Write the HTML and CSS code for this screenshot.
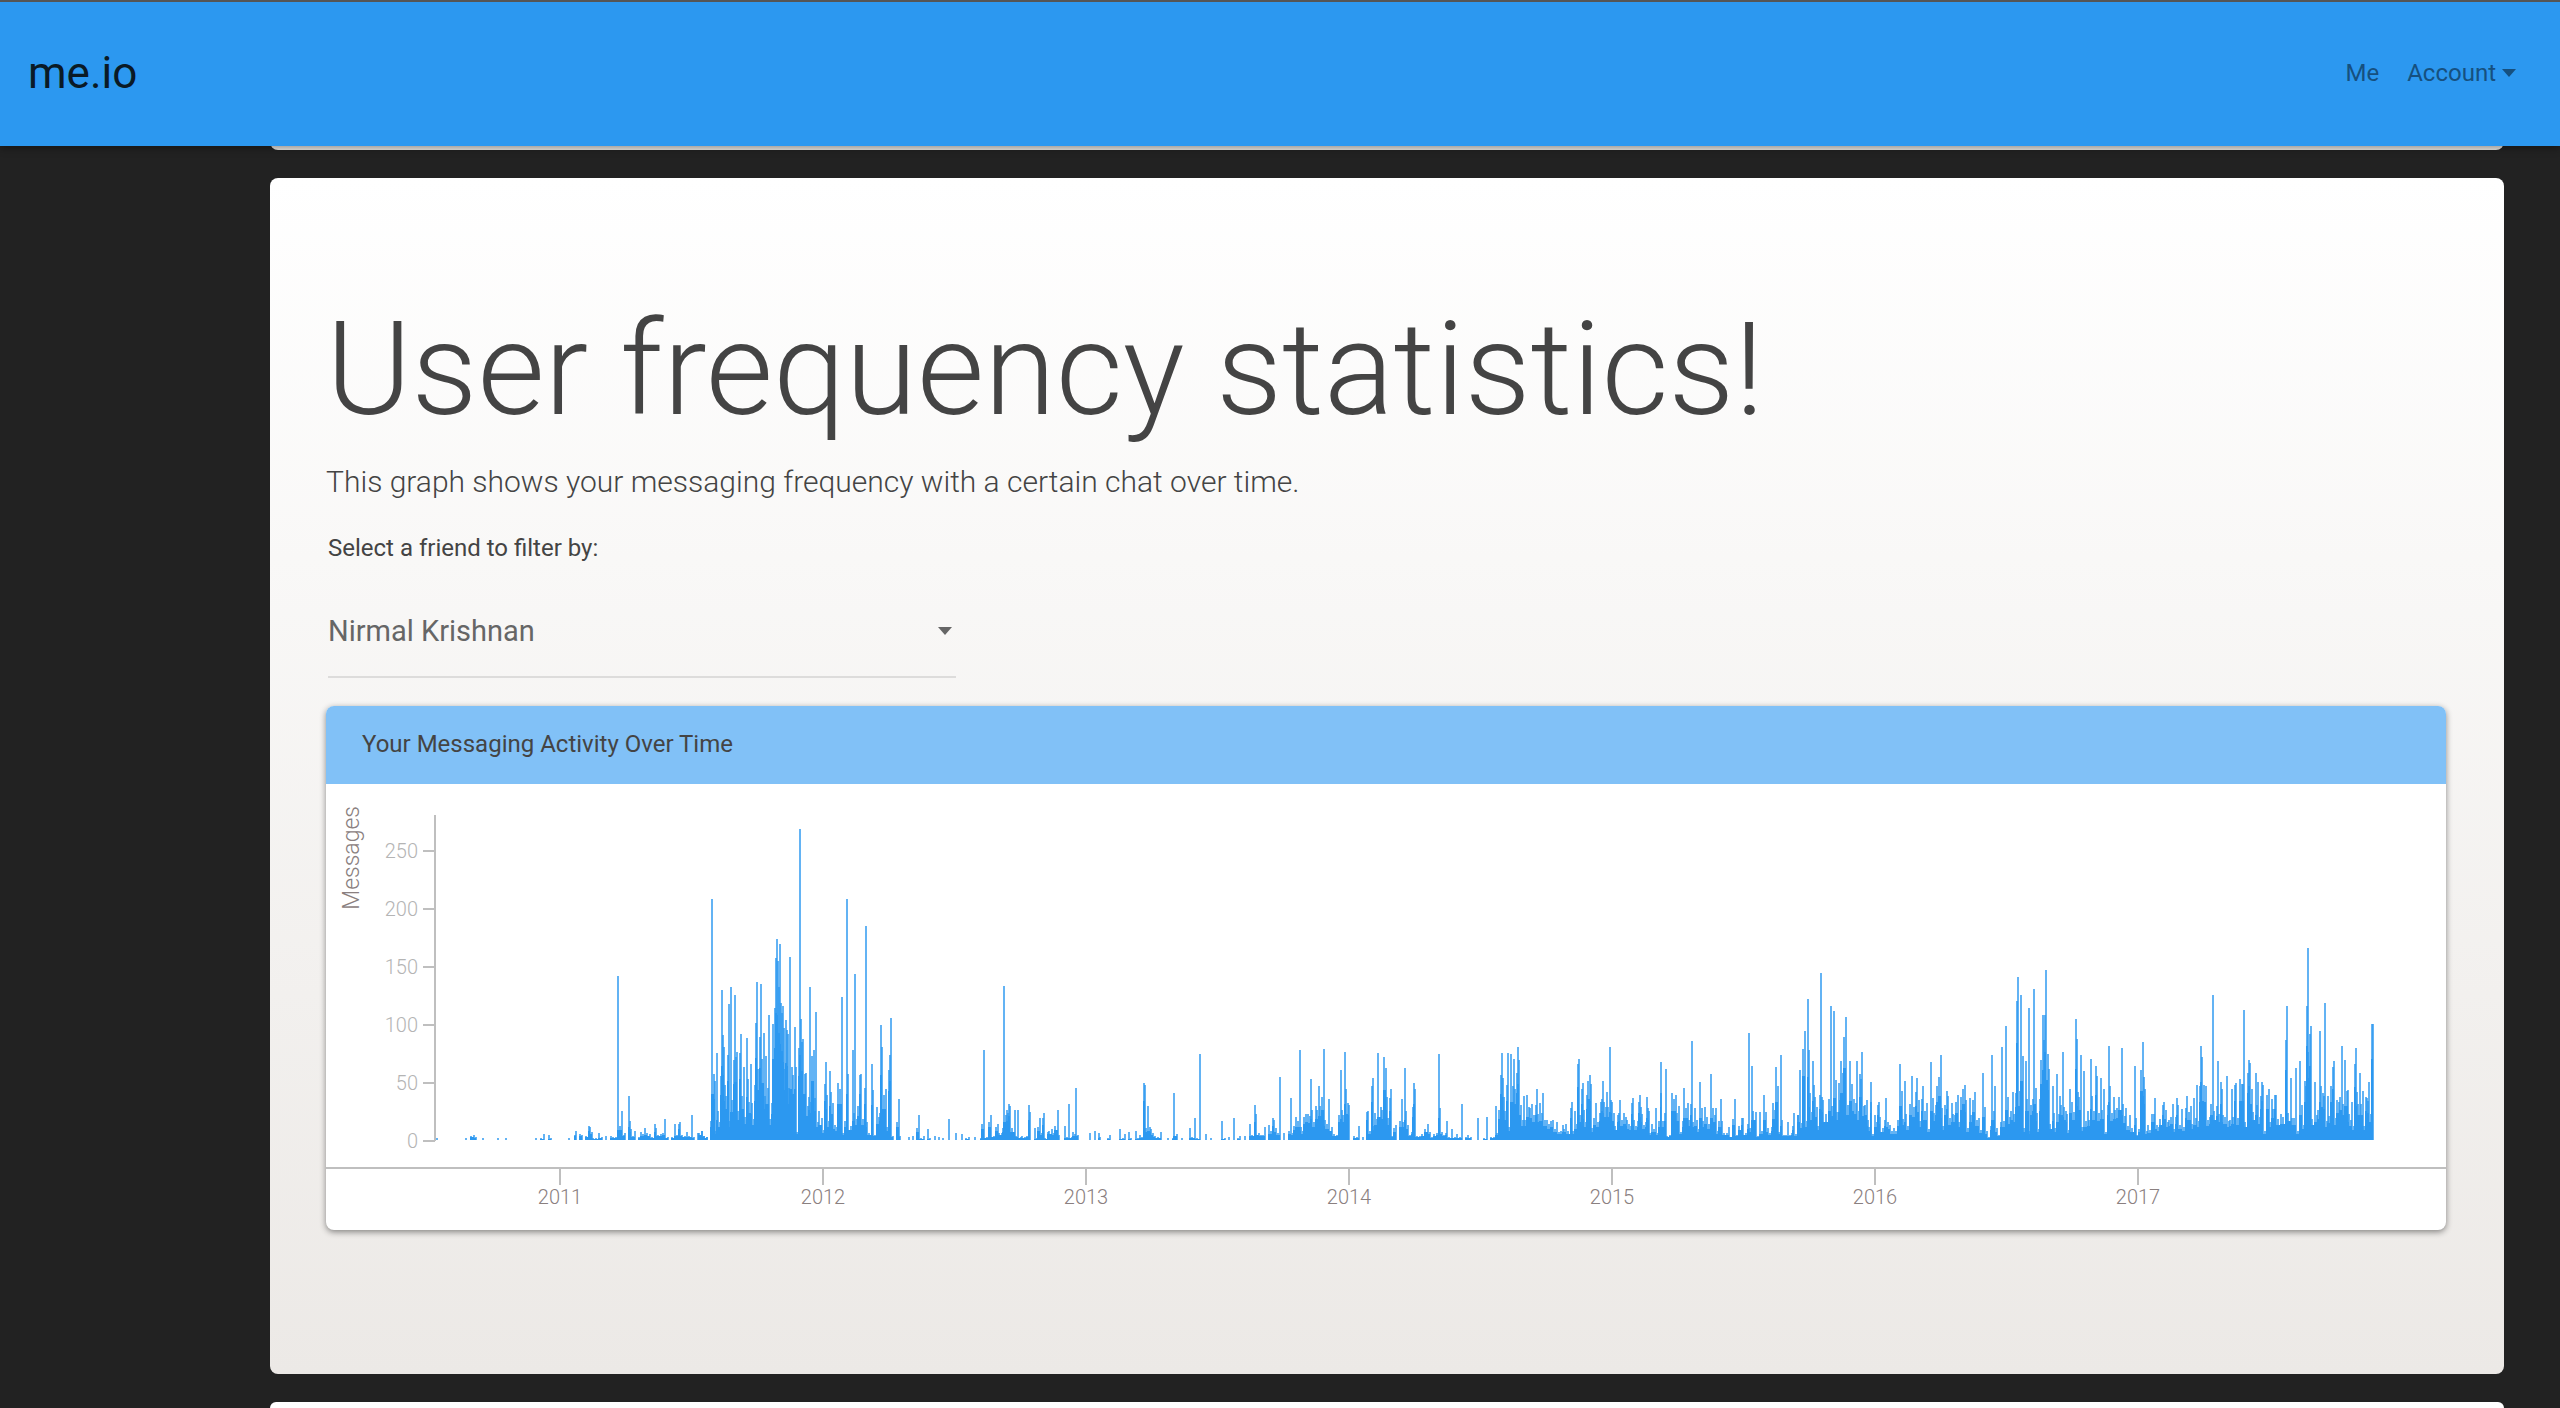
FILE: index.html
```html
<!DOCTYPE html>
<html lang="en">
<head>
<meta charset="utf-8">
<title>me.io</title>
<meta name="viewport" content="width=device-width, initial-scale=1">
<link rel="stylesheet" href="styles.css">
</head>
<body>
<header class="navbar">
  <a class="brand" href="#">me.io</a>
  <nav class="links">
    <a class="link" href="#">Me</a>
    <button class="link" type="button">Account
      <svg class="caret" viewBox="0 0 14 8" aria-hidden="true"><path d="M0 0h14L7 8z"/></svg>
    </button>
  </nav>
</header>
<main class="cards">
  <section class="card card-previous"></section>
  <section class="card card-main">
    <h1 class="title">User frequency statistics!</h1>
    <p class="lead">This graph shows your messaging frequency with a certain chat over time.</p>
    <label class="label" for="friend">Select a friend to filter by:</label>
    <div class="select-box">
      <select class="select" id="friend"><option>Nirmal Krishnan</option></select>
      <svg class="select-caret" viewBox="0 0 14 8" aria-hidden="true"><path d="M0 0h14L7 8z"/></svg>
    </div>
    <article class="panel">
      <h2 class="panel-title">Your Messaging Activity Over Time</h2>
      <svg class="chart" id="chart" viewBox="0 0 2120 446" role="img" aria-label="Messages over time"></svg>
    </article>
  </section>
  <section class="card card-next"></section>
</main>
<script src="chart.js"></script>
</body>
</html>
```
FILE: styles.css
```css
* {
  box-sizing: border-box;
}

body {
  display: flex;
  flex-direction: column;
  margin: 0;
  min-height: 100vh;
  background: #222;
  border-top: 2px solid #555;
  font-family: Roboto, "Liberation Sans", sans-serif;
  color: #444;
}

.navbar {
  position: relative;
  z-index: 1;
  display: flex;
  align-items: center;
  justify-content: space-between;
  height: 144px;
  padding: 0 44px 2px 28px;
  background: #2c98f0;
  box-shadow: 0 2px 8px rgba(0, 0, 0, .4);
}

.brand {
  font-size: 44px;
  line-height: 48px;
  color: #0a1a26;
  text-decoration: none;
}

.links {
  display: flex;
  align-items: center;
  gap: 28px;
}

.link {
  display: flex;
  align-items: center;
  gap: 6px;
  padding: 0;
  border: 0;
  background: none;
  font: 400 24px/32px Roboto, "Liberation Sans", sans-serif;
  color: #16507f;
  text-decoration: none;
}

.caret,
.select-caret {
  width: 14px;
  height: 8px;
  fill: currentColor;
}

.cards {
  display: flex;
  flex: 1;
  flex-direction: column;
  gap: 28px;
  margin: -16px 56px 0 270px;
}

.card {
  flex: none;
  border-radius: 8px;
  background: linear-gradient(#fff, #ece9e6);
}

.card-previous {
  height: 20px;
  background: #ece9e6;
}

.card-main {
  padding: 124px 58px 144px 56px;
}

.card-next {
  flex: 1;
  border-radius: 8px 8px 0 0;
  background: #fff;
}

.title {
  margin: 0 0 24px;
  font-size: 130px;
  line-height: 136px;
  font-weight: 300;
}

.lead {
  margin: 0 0 30px;
  font-size: 30px;
  line-height: 40px;
  font-weight: 300;
}

.label {
  display: block;
  margin: 0 0 22px 2px;
  font-size: 24px;
  line-height: 32px;
}

.select-box {
  position: relative;
  width: 628px;
  margin: 0 0 28px 2px;
  color: #666;
}

.select {
  display: block;
  width: 100%;
  height: 92px;
  padding: 0;
  border: 0;
  border-bottom: 2px solid #dddcdb;
  appearance: none;
  background: none;
  font: 400 29px/40px Roboto, "Liberation Sans", sans-serif;
  color: inherit;
}

.select-caret {
  position: absolute;
  top: 41px;
  right: 4px;
  pointer-events: none;
}

.panel {
  overflow: hidden;
  border-radius: 8px;
  background: #fff;
  box-shadow: 0 2px 6px rgba(0, 0, 0, .45);
}

.panel-title {
  margin: 0;
  padding: 0 36px 2px;
  background: #81c1f7;
  font-size: 24px;
  line-height: 76px;
  font-weight: 400;
}

.chart {
  display: block;
  width: 100%;
  font-family: Roboto, "Liberation Sans", sans-serif;
  font-weight: 300;
  font-size: 20px;
}

.axis {
  fill: none;
  stroke: #bfbfbf;
  stroke-width: 2;
}

.tick-y {
  fill: #b4b4b4;
  text-anchor: end;
}

.tick-x {
  fill: #8a8080;
  text-anchor: middle;
}

.axis-name {
  font-size: 23px;
  fill: #8a8080;
  text-anchor: end;
}

.bars {
  fill: #2c98f0;
  shape-rendering: crispEdges;
}

.bars-soft {
  fill-opacity: .74;
}
```
FILE: chart.js
```js
// Each run holds the chart x of its start, its floor, and pairs of
// (offset, top). Offsets and tops are in thirds of a chart unit.
const runs = [
  [-6, 1080, "351 1074,438 1074,453 1068,463 1066,469 1070,489 1074,534 1074,557 1074,648 1074,663 1074,671 1062,686 1066,692 1074,748 1074,766 1065,769 1053,781 1062,785 1064,797 1069,807 1038,811 1042,815 1057,820 1074,828 1074,837 1059,846 1070,857 1068,872 1068,880 1071,888 1071,894 588,900 1038,906 993,912 1065,916 1059,927 948,931 1023,934 1046,940 1068,946 1053,956 1072,964 1056,970 1062,975 1045,982 1059,990 1062,996 1072,1005 1032,1009 1045,1015 1065,1022 1062,1029 1059,1035 1017,1045 1070,1056 1072,1065 1032,1070 1065,1078 1032,1081 1027,1086 1066,1094 1069,1101 1056,1107 1068,1116 1005,1121 1072,1135 1060,1146 1053,1152 1068,1160 1072"],
  [364, 1020, "26 999,36 993,42 1007,50 1011,63 963,66 297,72 822,76 843,79 993,82 759,85 934,90 966,93 828,96 570,99 705,102 741,106 855,109 888,114 765,118 612,121 963,124 561,127 900,132 780,135 585,138 770,141 756,145 933,150 759,153 702,156 888,162 801,165 950,171 714,174 837,178 906,183 792,187 909,192 957,195 855,198 669,202 546,205 808,210 711,213 552,216 777,222 699,225 889,228 768,234 865,237 645,241 957,246 910,249 672,255 624,258 474,261 417,264 483,267 560,270 432,273 609,276 640,279 618,282 684,285 807,288 660,291 690,294 702,297 865,300 471,306 801,309 825,315 681,318 801,322 995,327 744,330 87,333 657,336 727,339 717,345 822,349 820,353 918,357 890,360 561,363 905,366 768,372 750,375 895,379 636,383 965,388 933,396 954,402 989,405 852,408 786,412 885,416 963,420 813,423 876,429 909,435 975,440 981,444 849,450 867,456 591,460 1000,466 962,471 297,475 822,484 978,488 750,491 939,496 522,500 957,504 918,510 825,513 822,519 957,524 864,527 378,531 966,536 1000,546 792,550 870,555 1005,561 921,566 951,570 939,573 675,577 741,582 885,588 867,592 981,597 810,600 765,603 654,609 1008,621 966,627 897,631 1008,657 1011,669 1008,681 984,687 945"],
  [594, 720, "3 714,12 708,24 687,30 714,44 708,57 711,68 714,87 657,108 699,126 702,138 714,148 711,165 711,183 714,186 672,192 450,201 711,207 666,213 645,222 708,228 681,234 672,238 699,246 699,249 684,253 258,257 645,261 630,264 640,267 612,270 618,276 684,285 630,289 708,294 630,303 711,307 708,315 710,321 708,327 615,331 636,345 684,350 714,354 681,360 654,365 700,369 654,372 639,376 714,384 696,388 693,396 687,402 699,405 678,414 630,418 705,435 678,441 711,447 612,455 711,459 696,464 702,469 564,474 705,510 699,525 693,537 699,541 711,565 714,570 705,600 687,610 714,615 702,627 696,632 714,649 693,654 714,661 705,666 711,672 549,675 555,679 684,685 618,689 681,693 687,699 699,704 709,714 711,723 696,744 714,759 714,763 579,771 702,786 714,810 684,816 711,825 654,832 714,841 462,858 702,873 714,906 663,915 714,926 711,942 654,955 714"],
  [914, 360, "0 348,15 348,29 312,36 345,44 255,48 282,56 339,62 345,70 345,75 321,86 315,92 333,99 294,103 300,108 324,115 339,120 171,132 339,147 333,153 234,158 339,162 318,168 291,174 303,180 90,184 321,188 333,192 291,198 282,204 282,209 288,213 177,216 270,222 306,228 258,232 270,237 198,241 258,246 231,252 87,256 300,261 312,267 237,276 321,282 342,290 345,297 285,303 150,306 270,310 285,314 96,317 207,323 249,327 255,342 348,352 351,357 318,368 351,381 276,385 273,390 333,396 198,399 174,402 318,406 279,410 297,415 99,423 261,427 270,432 111,438 144,441 231,445 294,450 234,453 207,457 348,463 324,468 315,480 303,485 237,489 305,495 144,499 273,505 315,510 346,515 336,519 261,522 189,526 207,530 348,540 348,547 342,555 327,564 312,569 336,575 350,583 342,590 340,598 102,601 264,606 336,612 345,618 339,621 303,627 351,636 327,645 351,651 342,660 350,666 252,677 350,684 345,692 351,714 294,731 354,741 291,753 351,762 351,768 258,772 339,777 270,782 165,786 99,789 175,792 231,796 273,801 195,805 99,808 320,813 102,818 198,822 117,826 207,830 160,834 81,837 120"],
  [1154, 420, "123 315,129 360,132 288,136 360,142 285,147 321,151 324,157 312,162 345,168 315,171 267,175 342,180 309,185 340,189 279,195 360,201 360,207 372,213 363,219 360,225 387,231 366,237 396,243 392,249 375,252 387,258 372,264 393,273 324,276 306,280 392,285 333,290 372,294 192,297 177,301 345,306 267,309 249,313 330,317 366,321 285,324 243,330 225,333 252,337 384,342 354,349 309,354 366,361 339,363 306,366 297,369 243,373 306,377 321,381 276,385 320,390 141,394 300,397 306,402 339,406 378,413 345,417 339,420 300,426 360,433 339,437 351,441 360,447 372,452 378,456 309,459 294,462 360,468 378,474 363,477 306,480 285,483 321,487 342,491 374,498 366,501 291,505 324,508 333,511 400,517 372,521 387,527 324,533 399,537 363,542 279,544 186,550 363,555 339,558 207,562 408,570 405,575 279,582 297,588 285,592 339,597 318,603 396,609 363,612 264,618 324,624 309,628 360,633 312,637 123,640 366,645 324,651 360,656 387,661 246,666 324,670 362,675 321,681 351,687 372,693 222,699 324,704 345,708 324,713 393,717 363,723 297,727 363,732 399,740 399,748 381,759 357,765 297,772 405,776 378,785 354,789 354,798 400,804 372,807 99,811 384,816 198,820 333,829 336,835 408,840 336,846 393,852 285,858 336,865 384,870 399,876 381,879 309,885 330,888 201,894 258,898 396,903 165,907 360,912 405,918 405,924 366,930 405,936 399,940 378,943 339,948 402,954 345"],
  [1434, 570, "115 495,120 360,125 520,129 297,135 243,140 513,145 147,148 300,151 430,155 486,159 333,162 405,166 441,170 471,175 528,180 435,183 69,186 441,190 450,198 492,207 447,213 168,216 468,222 183,228 390,231 485,236 399,239 450,243 333,248 369,252 261,258 201,264 465,270 333,276 402,282 447,287 460,291 333,296 483,300 372,303 387,306 306,311 468,316 465,320 450,324 510,328 530,332 396,334 456,338 552,345 495,350 516,353 465,357 456,361 501,368 534,375 510,378 444,384 516,390 525,395 543,401 534,408 543,415 510,420 342,426 423,430 507,435 393,438 492,444 528,450 462,456 378,462 471,467 426,471 384,477 450,480 513,486 447,489 408,495 483,501 459,506 537,513 336,519 444,523 489,527 465,531 408,537 381,543 315,546 474,549 528,555 465,561 423,565 438,570 504,575 459,580 492,585 495,589 456,594 435,598 516,602 441,609 417,614 405,618 450,624 534,629 444,634 494,639 450,646 426,652 510,657 504,664 540,669 369,675 471,681 543,688 561,692 528,696 315,702 483,705 408,711 534,718 555,723 516,726 291,732 513,738 228,744 441,749 501,754 483,759 426,763 492,769 429,771 153,774 81,780 423,783 135,789 318,793 534,799 333,802 447,806 174,809 543,813 465,819 447,822 117,828 414,831 489,836 537,840 447,844 330,848 195,851 270,856 195,859 60,864 312,867 357,871 522,879 408,883 489,886 534,891 372,896 492,901 438,903 465,909 306,912 471,918 483,922 492,926 540,931 417,936 456,942 486"],
  [1734, 660, "48 297,51 357,55 516,58 530,63 405,67 620,72 453,78 603,83 573,88 600,93 417,96 528,101 573,108 438,111 468,116 579,123 474,126 570,132 507,138 636,144 555,147 378,150 498,155 579,162 531,166 570,171 564,178 531,186 384,190 552,194 588,198 564,204 618,210 585,216 624,224 438,227 594,232 645,238 628,243 450,248 366,252 471,256 507,260 633,265 615,271 630,276 582,281 582,286 534,291 615,296 620,301 597,308 555,312 546,318 570,324 606,328 600,332 591,339 552,343 627,347 590,351 534,354 555,360 615,366 567,373 621,378 564,381 528,387 576,393 558,397 612,403 534,408 594,412 495,417 603,420 498,423 378,426 411,432 495,438 498,444 600,449 591,454 552,459 225,463 573,470 558,474 423,478 582,483 486,486 507,490 585,495 590,501 468,506 603,511 600,516 507,520 590,525 495,528 489,534 594,540 477,545 492,549 492,552 270,556 606,564 459,568 420,571 429,575 507,580 576,587 459,590 555,594 486,600 590,604 528,606 486,610 495,614 633,621 525,627 507,631 606,635 537,640 567,645 525,649 525,655 597,663 582,669 591,678 360,681 258,685 580,693 474,697 594,702 594,708 444,715 633,720 423,725 555,731 615,734 483,738 498,741 258,743 84,745 396,750 342,753 318,757 597,765 486,770 585,775 570,779 333,782 498,788 519,792 528,795 249,800 603,804 528,808 588,813 498,818 441,822 423,828 594,831 540,836 546,840 531,846 378,850 552,856 420,860 513,864 510,868 582,873 600,876 546,882 618,885 432,887 384,890 516,894 552,900 459,904 552,909 513,913 618,917 531,921 535,925 543,927 486,932 582,935 312,938 312"]
];

const FLOOR = 356;
const points = runs.flatMap(([start, floor, text]) =>
  text.split(",").map(pair => {
    const [offset, top] = pair.split(" ").map(Number);
    return { x: start + Math.round(offset / 3) - 1, h: Math.round((floor - top) / 3) };
  })
);

const bar = (x, w, h) => `<path d="M${x} ${FLOOR}v${-h}h${w}v${h}z"/>`;
let soft = "";
let solid = "";
points.forEach((p, i) => {
  soft += bar(p.x, 2, p.h);
  const next = points[i + 1];
  if (!next) return;
  const gap = next.x - p.x;
  if (gap <= 3) {
    solid += bar(p.x, gap + 1, Math.round(Math.min(p.h, next.h) * 0.7));
  } else if (p.x > 1170 && gap <= 6) {
    solid += bar(p.x, gap, 3);
  }
});

let axes = `<path class="axis" d="M109 31V357M0 384H2120`;
let labels = `<text class="axis-name" transform="translate(33 22) rotate(-90)">Messages</text>`;
for (let value = 0; value <= 250; value += 50) {
  const y = 357 - value * 1.16;
  axes += `M97 ${y}H109`;
  labels += `<text class="tick-y" x="92" y="${y + 7}">${value}</text>`;
}
[234, 497, 760, 1023, 1286, 1549, 1812].forEach((x, i) => {
  axes += `M${x} 384V401`;
  labels += `<text class="tick-x" x="${x}" y="420">${2011 + i}</text>`;
});

document.getElementById("chart").innerHTML =
  `<g class="bars bars-soft">${soft}</g><g class="bars">${solid}</g>${axes}"/>${labels}`;
```
